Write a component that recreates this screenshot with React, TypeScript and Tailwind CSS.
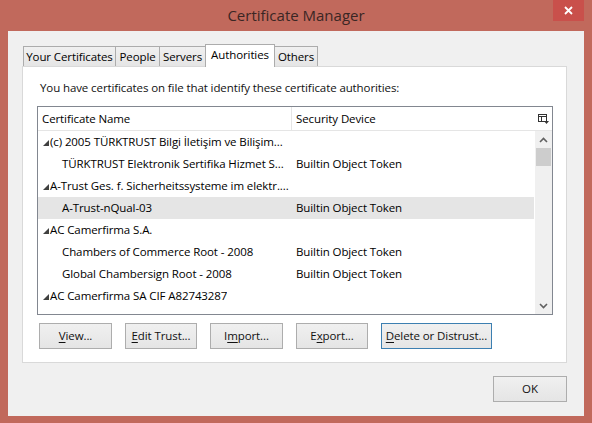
import React from "react";

const Tri = () => (
  <svg width="6" height="6" viewBox="0 0 6 6" className="shrink-0 mt-[2px]">
    <polygon points="6,0 6,6 0,6" fill="#404040" />
  </svg>
);

type Row = { level: 0 | 1; name: string; dev?: string; sel?: boolean };

const rows: Row[] = [
  { level: 0, name: "(c) 2005 TÜRKTRUST Bilgi İletişim ve Bilişim..." },
  { level: 1, name: "TÜRKTRUST Elektronik Sertifika Hizmet S...", dev: "Builtin Object Token" },
  { level: 0, name: "A-Trust Ges. f. Sicherheitssysteme im elektr...." },
  { level: 1, name: "A-Trust-nQual-03", dev: "Builtin Object Token", sel: true },
  { level: 0, name: "AC Camerfirma S.A." },
  { level: 1, name: "Chambers of Commerce Root - 2008", dev: "Builtin Object Token" },
  { level: 1, name: "Global Chambersign Root - 2008", dev: "Builtin Object Token" },
  { level: 0, name: "AC Camerfirma SA CIF A82743287" },
];

const Btn = ({
  children,
  w,
  focus,
}: {
  children: React.ReactNode;
  w: string;
  focus?: boolean;
}) => (
  <div
    className={`${w} h-[26px] flex items-center justify-center whitespace-nowrap border bg-gradient-to-b from-[#f0f0f0] to-[#e5e5e5] text-[#111] ${
      focus ? "border-[#3c7fb1]" : "border-[#adadad]"
    }`}
  >
    {children}
  </div>
);

const U = ({ c }: { c: string }) => <span className="underline underline-offset-[2px]">{c}</span>;

export default function App() {
  const tabs = [
    { t: "Your Certificates", w: "w-[93px]" },
    { t: "People", w: "w-[45px]" },
    { t: "Servers", w: "w-[47px]" },
    { t: "Authorities", w: "w-[70px]", active: true },
    { t: "Others", w: "w-[44px]" },
  ];
  return (
    <div className="w-[592px] h-[423px] bg-[#c1695c] flex flex-col px-[8px] pb-[7px] font-['Open_Sans',sans-serif] text-[11.5px] tracking-[-0.1px] text-black relative">
      <div className="h-[31px] flex items-center justify-center text-[15px] tracking-normal text-[#3a2624] pb-[1px]">
        Certificate Manager
      </div>
      <div className="absolute top-0 right-[8px] w-[31px] h-[21px] bg-[#c9504b] flex items-center justify-center">
        <svg width="9" height="9" viewBox="0 0 9 9">
          <path d="M1 1 L8 8 M8 1 L1 8" stroke="#ffffff" strokeWidth="1.8" />
        </svg>
      </div>

      <div className="flex-1 bg-[#f0f0f0] flex flex-col pt-[13px] pl-[14px] pr-[17px]">
        <div className="flex items-end h-[22px] pl-[1px]">
          {tabs.map((tab, i) =>
            tab.active ? (
              <div
                key={i}
                className={`${tab.w} h-[23px] -mb-px -ml-px relative z-10 bg-white border border-b-0 border-[#acacac] flex items-center justify-center whitespace-nowrap pb-[2px] leading-none`}
              >
                {tab.t}
              </div>
            ) : (
              <div
                key={i}
                className={`${tab.w} h-[20px] ${i === 0 ? "" : "-ml-px"} bg-gradient-to-b from-[#f0f0f0] to-[#e5e5e5] border border-b-0 border-[#acacac] flex items-center justify-center whitespace-nowrap leading-none`}
              >
                {tab.t}
              </div>
            )
          )}
        </div>

        <div className="h-[297px] bg-white border border-[#d9d9d9] pl-[14px] pr-[13px] flex flex-col">
          <div className="mt-[13px] leading-[16px] pl-[3px] text-[#111] whitespace-nowrap">
            You have certificates on file that identify these certificate authorities:
          </div>

          <div className="mt-[10px] h-[209px] border border-[#828790] flex flex-col overflow-hidden">
            <div className="h-[24px] flex border-b border-[#e5e5e5] shrink-0">
              <div className="w-[254px] border-r border-[#e5e5e5] pl-[4px] flex items-center">
                Certificate Name
              </div>
              <div className="flex-1 pl-[4px] flex items-center">Security Device</div>
              <div className="w-[17px] flex items-center justify-center">
                <svg width="11" height="10" viewBox="0 0 11 10">
                  <rect x="0.5" y="0.5" width="8" height="7" fill="none" stroke="#333" />
                  <path d="M0.5 2.5 H8.5 M3.5 2.5 V7.5" stroke="#333" />
                  <polygon points="6,7 11,7 8.5,10" fill="#333" />
                </svg>
              </div>
            </div>
            <div className="flex-1 flex min-h-0">
              <div className="flex-1 flex flex-col overflow-hidden">
                {rows.map((r, i) => (
                  <div
                    key={i}
                    className={`h-[22px] shrink-0 flex items-center whitespace-nowrap mr-[1px] ${
                      r.sel ? "bg-[#e5e5e5]" : ""
                    }`}
                  >
                    {r.level === 0 ? (
                      <div className="flex items-center pl-[5px] gap-[1px] overflow-hidden">
                        <Tri />
                        <span>{r.name}</span>
                      </div>
                    ) : (
                      <>
                        <div className="w-[254px] shrink-0 pl-[24px] overflow-hidden">{r.name}</div>
                        <div className="pl-[4px]">{r.dev}</div>
                      </>
                    )}
                  </div>
                ))}
              </div>
              <div className="w-[17px] bg-[#f0f0f0] flex flex-col items-center">
                <div className="h-[17px] flex items-center justify-center">
                  <svg width="9" height="6" viewBox="0 0 9 6">
                    <path d="M1 5 L4.5 1.5 L8 5" fill="none" stroke="#606060" strokeWidth="1.6" />
                  </svg>
                </div>
                <div className="w-[15px] h-[18px] bg-[#cdcdcd]" />
                <div className="flex-1" />
                <div className="h-[17px] flex items-center justify-center">
                  <svg width="9" height="6" viewBox="0 0 9 6">
                    <path d="M1 1 L4.5 4.5 L8 1" fill="none" stroke="#606060" strokeWidth="1.6" />
                  </svg>
                </div>
              </div>
            </div>
          </div>

          <div className="mt-[8px] ml-[2px] flex gap-[13px]">
            <Btn w="w-[73px]">
              <U c="V" />iew...
            </Btn>
            <Btn w="w-[72px]">
              <U c="E" />dit Trust...
            </Btn>
            <Btn w="w-[73px]">
              I<U c="m" />port...
            </Btn>
            <Btn w="w-[72px]">
              E<U c="x" />port...
            </Btn>
            <Btn w="w-[111px]" focus>
              <U c="D" />elete or Distrust...
            </Btn>
          </div>
        </div>

        <div className="mt-[13px] flex justify-end">
          <Btn w="w-[74px]">OK</Btn>
        </div>
      </div>
    </div>
  );
}
